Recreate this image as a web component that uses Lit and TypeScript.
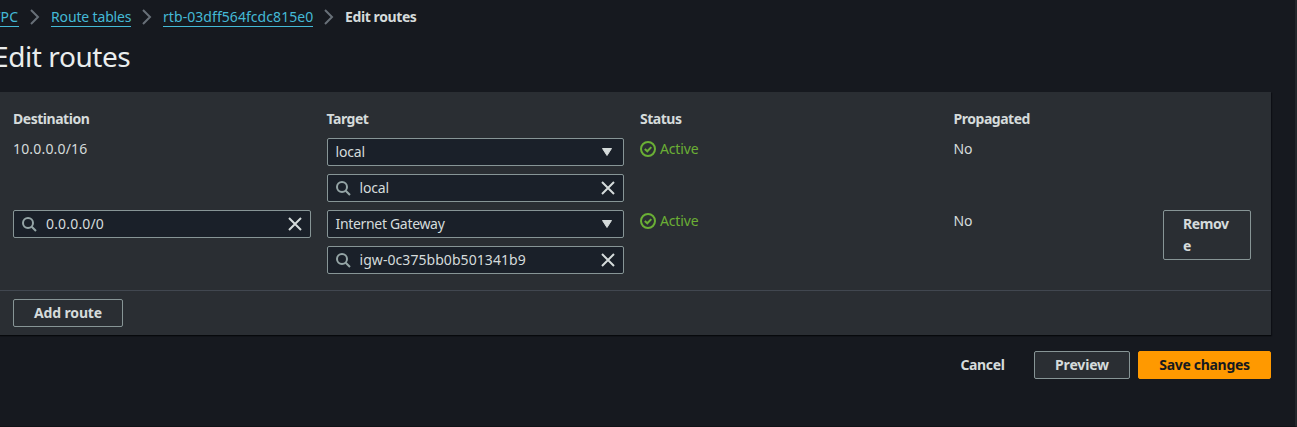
import { LitElement, html, css, svg } from "lit";
import { customElement } from "lit/decorators.js";

const searchIcon = html`<svg class="icon muted" viewBox="0 0 16 16"><circle cx="7" cy="7" r="5" /><path d="M10.7 10.7 15 15" /></svg>`;
const closeIcon = html`<svg class="icon close" viewBox="0 0 16 16"><path d="m2 2 12 12M14 2 2 14" /></svg>`;
const caretIcon = html`<svg class="icon caret" viewBox="0 0 16 16"><path d="M3.5 4.5h9L8 11.5z" /></svg>`;
const chevron = html`<svg class="icon chevron" viewBox="0 0 16 16"><path d="m4 1 7 7-7 7" /></svg>`;
const checkIcon = html`<svg class="icon check" viewBox="0 0 16 16">${svg`<circle cx="8" cy="8" r="7" /><path d="m4.8 8 2.5 2.3 4-4.2" />`}</svg>`;

@customElement("app-root")
export class AppRoot extends LitElement {
  static styles = css`
    :host {
      display: block;
      box-sizing: border-box;
      height: 427px;
      overflow: hidden;
      background: #16191f;
      border-right: 2px solid #23272c;
      border-bottom: 1px solid #101216;
      color: #d5dbdb;
      font: 14px/22px "Noto Sans", sans-serif;
      letter-spacing: -0.15px;
    }
    * { box-sizing: border-box; }
    .icon { width: 16px; height: 16px; flex: none; fill: none; stroke: currentColor; stroke-width: 2; }
    .muted { color: #95a5a6; }
    .caret { fill: currentColor; stroke-width: 1; stroke-linejoin: round; }
    .chevron { color: #687078; margin: 0 8px; }
    .crumbs { display: flex; align-items: center; height: 22px; margin: 6px 0 0 -8px; white-space: nowrap; }
    .link { color: #44b9d6; border-bottom: 1px solid; line-height: 18px; height: 19px; margin-top: 1px; }
    .vpc { width: 27px; letter-spacing: 0.2px; }
    .tables { width: 80px; }
    .rtb { width: 150px; letter-spacing: 0.06px; }
    .current { font-weight: 700; letter-spacing: -0.4px; }
    .title { margin: 10px 0 18px -7px; font-size: 28px; font-weight: 400; line-height: 36px; letter-spacing: -0.42px; color: #eaeded; }
    .panel { width: 1271px; height: 243px; background: #2a2e33; box-shadow: 0 1px 1px #07090c, 1px 1px 1px #0f1217; }
    .table { height: 198px; padding: 16px 20px 0 13px; }
    .row { display: grid; grid-template-columns: repeat(4, 1fr); column-gap: 16px; height: 72px; }
    .head { height: 30px; font-weight: 700; letter-spacing: -0.47px; }
    .stack { display: grid; row-gap: 8px; align-content: start; }
    .field { display: flex; align-items: center; height: 28px; padding: 0 8px; gap: 8px; background: #1a2029; border: 1px solid #879596; border-radius: 2px; white-space: nowrap; }
    .search { padding: 0 7px; gap: 9px; }
    .value { flex: 1; }
    .ip, .cidr { letter-spacing: 0.17px; }
    .igw { letter-spacing: 0.06px; }
    .gateway { letter-spacing: -0.32px; }
    .status { display: flex; gap: 4px; color: #6aaf35; height: 22px; align-items: center; }
    .last { display: flex; justify-content: space-between; align-items: flex-start; }
    .btn { height: 28px; padding: 2px 20px; border: 1px solid #879596; border-radius: 2px; font-weight: 700; background: #2a2e33; white-space: nowrap; letter-spacing: -0.15px; text-align: center; }
    .remove { width: 88px; height: 50px; padding: 2px 18px 2px 19px; white-space: normal; overflow-wrap: anywhere; text-align: left; letter-spacing: -0.4px; }
    .footer { border-top: 1px solid #414750; padding: 8px 13px; display: flex; }
    .add { width: 110px; }
    .actions { display: flex; justify-content: flex-end; width: 1271px; margin-top: 16px; gap: 8px; }
    .cancel { width: 87px; background: none; border-color: transparent; letter-spacing: -0.35px; }
    .preview { width: 96px; }
    .save { width: 133px; background: #ff9900; border-color: #ff9900; color: #16191f; letter-spacing: -0.45px; padding: 2px 0; letter-spacing: -0.3px; }
  `;

  select(value: string, cls: string) {
    return html`<div class="field"><span class="value ${cls}">${value}</span>${caretIcon}</div>`;
  }
  search(value: string, cls: string) {
    return html`<div class="field search">${searchIcon}<span class="value ${cls}">${value}</span>${closeIcon}</div>`;
  }
  status() {
    return html`<div class="status">${checkIcon}<span class="active">Active</span></div>`;
  }

  render() {
    return html`
      <nav class="crumbs">
        <span class="link vpc">VPC</span>${chevron}
        <span class="link tables">Route tables</span>${chevron}
        <span class="link rtb">rtb-03dff564fcdc815e0</span>${chevron}
        <span class="current">Edit routes</span>
      </nav>
      <h1 class="title">Edit routes</h1>
      <section class="panel">
        <div class="table">
          <div class="row head"><span>Destination</span><span>Target</span><span>Status</span><span>Propagated</span></div>
          <div class="row">
            <span class="ip">10.0.0.0/16</span>
            <div class="stack">${this.select("local", "local")}${this.search("local", "local")}</div>
            ${this.status()}
            <span>No</span>
          </div>
          <div class="row">
            <div class="stack">${this.search("0.0.0.0/0", "cidr")}</div>
            <div class="stack">${this.select("Internet Gateway", "gateway")}${this.search("igw-0c375bb0b501341b9", "igw")}</div>
            ${this.status()}
            <div class="last"><span>No</span><div class="btn remove">Remove</div></div>
          </div>
        </div>
        <div class="footer"><div class="btn add">Add route</div></div>
      </section>
      <div class="actions">
        <div class="btn cancel">Cancel</div>
        <div class="btn preview">Preview</div>
        <div class="btn save">Save changes</div>
      </div>
    `;
  }
}
